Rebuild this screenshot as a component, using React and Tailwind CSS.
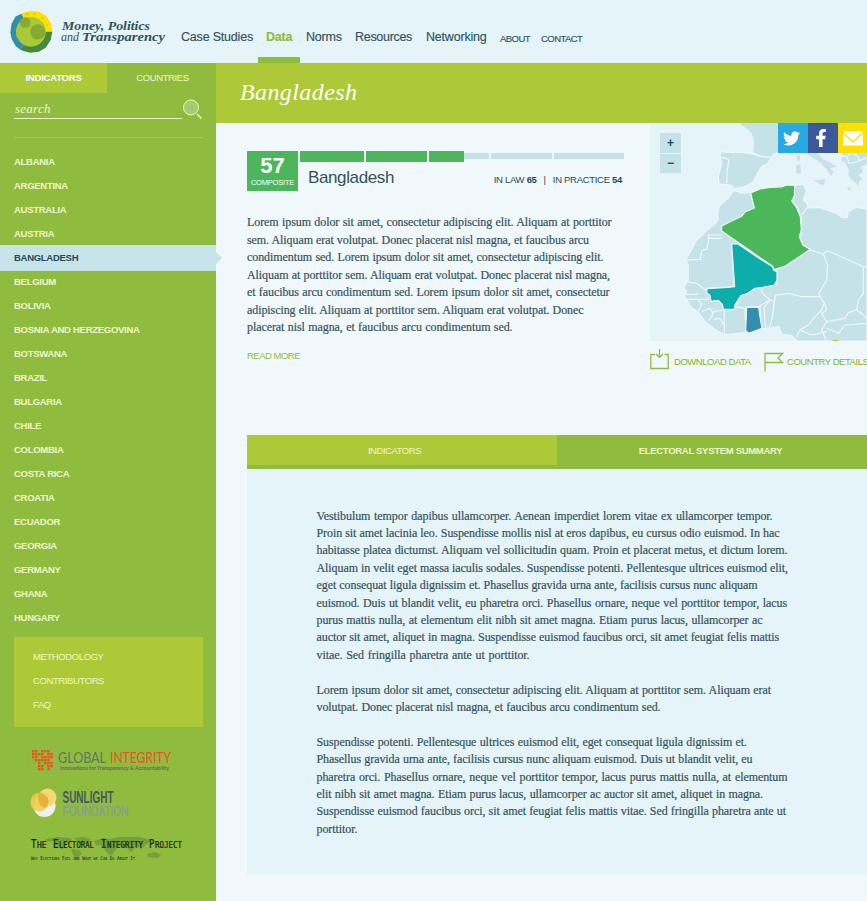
import React from "react";
import { FaFacebookF, FaTwitter } from "react-icons/fa";

const SANS = "font-['Liberation_Sans',Arial,sans-serif]";
const SERIF = "font-['Liberation_Serif',Georgia,serif]";

const countries = [
  "Albania", "Argentina", "Australia", "Austria", "Bangladesh", "Belgium", "Bolivia",
  "Bosnia and Herzegovina", "Botswana", "Brazil", "Bulgaria", "Chile", "Colombia",
  "Costa Rica", "Croatia", "Ecuador", "Georgia", "Germany", "Ghana", "Hungary",
];

const intro = [
  [364.5, "Lorem ipsum dolor sit amet, consectetur adipiscing elit. Aliquam at porttitor"],
  [342, "sem. Aliquam erat volutpat. Donec placerat nisl magna, et faucibus arcu"],
  [356.5, "condimentum sed. Lorem ipsum dolor sit amet, consectetur adipiscing elit."],
  [363, "Aliquam at porttitor sem. Aliquam erat volutpat. Donec placerat nisl magna,"],
  [362.5, "et faucibus arcu condimentum sed. Lorem ipsum dolor sit amet, consectetur"],
  [336.5, "adipiscing elit. Aliquam at porttitor sem. Aliquam erat volutpat. Donec"],
  [265.5, "placerat nisl magna, et faucibus arcu condimentum sed."],
];

const summary = [
  [
    [456, "Vestibulum tempor dapibus ullamcorper. Aenean imperdiet lorem vitae ex ullamcorper tempor."],
    [463, "Proin sit amet lacinia leo. Suspendisse mollis nisl at eros dapibus, eu cursus odio euismod. In hac"],
    [471, "habitasse platea dictumst. Aliquam vel sollicitudin quam. Proin et placerat metus, et dictum lorem."],
    [471.5, "Aliquam in velit eget massa iaculis sodales. Suspendisse potenti. Pellentesque ultrices euismod elit,"],
    [441, "eget consequat ligula dignissim et. Phasellus gravida urna ante, facilisis cursus nunc aliquam"],
    [470.5, "euismod. Duis ut blandit velit, eu pharetra orci. Phasellus ornare, neque vel porttitor tempor, lacus"],
    [446, "purus mattis nulla, at elementum elit nibh sit amet magna. Etiam purus lacus, ullamcorper ac"],
    [462.5, "auctor sit amet, aliquet in magna. Suspendisse euismod faucibus orci, sit amet feugiat felis mattis"],
    [213, "vitae. Sed fringilla pharetra ante ut porttitor."],
  ],
  [
    [454.5, "Lorem ipsum dolor sit amet, consectetur adipiscing elit. Aliquam at porttitor sem. Aliquam erat"],
    [344, "volutpat. Donec placerat nisl magna, et faucibus arcu condimentum sed."],
  ],
  [
    [430.5, "Suspendisse potenti. Pellentesque ultrices euismod elit, eget consequat ligula dignissim et."],
    [436, "Phasellus gravida urna ante, facilisis cursus nunc aliquam euismod. Duis ut blandit velit, eu"],
    [471, "pharetra orci. Phasellus ornare, neque vel porttitor tempor, lacus purus mattis nulla, at elementum"],
    [446.5, "elit nibh sit amet magna. Etiam purus lacus, ullamcorper ac auctor sit amet, aliquet in magna."],
    [469.5, "Suspendisse euismod faucibus orci, sit amet feugiat felis mattis vitae. Sed fringilla pharetra ante ut"],
    [44, "porttitor."],
  ],
];

function Lines({ lines }) {
  return (
    <p className={`${SERIF} text-[12px] tracking-[-0.08px] text-[#35535a] [-webkit-text-stroke:0.2px_#35535a]`}>
      {lines.map(([width, text]) => (
        <span key={text} className="block whitespace-nowrap [text-align-last:justify]" style={{ width }}>
          {text}
        </span>
      ))}
    </p>
  );
}

function Logo() {
  return (
    <svg className="mt-[11px] ml-[10px] h-[42px] w-[43px] shrink-0" viewBox="30 32 128 127">
      <path d="M93 95 63 40 78 34 95 32 119 35 140 49 154 72 157 95Z" fill="#fbe000" />
      <path d="M93 95H157L152 120 137 143 116 155 90 158 72 154 60 149Z" fill="#46893f" />
      <path d="M93 95 60 149 46 138 34 117 30 96 34 70 46 49 63 40Z" fill="#318fae" />
      <circle cx="92" cy="95" r="45" fill="#a9c935" />
      <circle cx="75" cy="67" r="16" fill="#87aa34" />
      <circle cx="113" cy="95" r="23" fill="#87aa34" />
      <g fill="#e0b818"><circle cx="80" cy="42" r="3" /><circle cx="104" cy="42" r="3" /><circle cx="128" cy="54" r="3" /><circle cx="142" cy="75" r="3" /></g>
    </svg>
  );
}

function Header() {
  return (
    <header className="flex h-[63px] bg-[#e5f4f9] text-[#34525a]">
      <Logo />
      <svg className="mt-[16px] ml-[8px] h-[32px] w-[106px] shrink-0" viewBox="0 0 106 32">
        <g fontFamily="Liberation Serif, serif" fontStyle="italic" fill="#34525a" fontSize="12.5">
          <text x="1" y="13.500" fontWeight="bold" textLength="88" lengthAdjust="spacingAndGlyphs">Money, Politics</text>
          <text x="0" y="24.500" textLength="18" lengthAdjust="spacingAndGlyphs">and</text>
          <text x="21" y="24.500" fontWeight="bold" textLength="83" lengthAdjust="spacingAndGlyphs">Transparency</text>
        </g>
      </svg>
      <nav className="ml-[14px] flex text-[12.5px] leading-[15px] tracking-[-0.2px] [-webkit-text-stroke:0.15px]">
        <a className="w-[77px] pt-[30px] whitespace-nowrap">Case Studies</a>
        <a className="w-[42px] border-b-[6px] border-[#8fbc3f] pt-[30px] pl-2 font-bold whitespace-nowrap text-[#8fbc3f]">Data</a>
        <a className="ml-[6px] w-[49px] pt-[30px]">Norms</a>
        <a className="w-[71px] pt-[30px] tracking-[-0.3px]">Resources</a>
        <a className="w-[74px] pt-[30px]">Networking</a>
        <a className="w-[41px] pt-[31px] text-[9.5px] tracking-[-0.55px]">ABOUT</a>
        <a className="pt-[31px] text-[9.5px] tracking-[-0.55px]">CONTACT</a>
      </nav>
    </header>
  );
}

const dots = ["1101110", "1111011", "1101111", "0111110", "0010111", "0011011", "0011010"];

const projectName = [
  ["T", 31, 5.5, "HE", 37, 9.5],
  ["E", 53, 5.5, "LECTORAL", 59, 35],
  ["I", 101, 5.5, "NTEGRITY", 107, 36],
  ["P", 149, 5.5, "ROJECT", 155, 27],
];

function Partners() {
  return (
    <svg className="mt-[15px] ml-[25px] h-[125px] w-[165px]" viewBox="25 742 165 125">
      <rect x="31.500" y="749.500" width="23" height="22" fill="none" stroke="#a3ab6e" />
      {dots.map((row, y) =>
        [...row].map((on, x) =>
          on === "1" ? <rect key={`${x}-${y}`} x={32 + x * 3.05} y={750 + y * 3} width="2.400" height="2.400" fill="#f04e23" /> : null
        )
      )}
      <g fontFamily="Lato, sans-serif">
        <text x="58" y="762.500" fontSize="15" fill="#64745a" textLength="48" lengthAdjust="spacingAndGlyphs">GLOBAL</text>
        <text x="110" y="762.500" fontSize="15" fill="#f04e23" textLength="61" lengthAdjust="spacingAndGlyphs">INTEGRITY</text>
        <text x="60" y="770" fontSize="6" fill="#64745a" stroke="#64745a" strokeWidth=".2" textLength="109" lengthAdjust="spacingAndGlyphs">Innovations for Transparency &amp; Accountability</text>
      </g>
      <circle cx="44.500" cy="806" r="11" fill="#eff0ee" />
      <circle cx="47.500" cy="797.500" r="9" fill="#f8d778" />
      <circle cx="39.500" cy="802" r="9.200" fill="#f4cb4d" opacity=".9" />
      <path d="M39 793a9 9 0 0 1 9.500 10 9 9 0 0 1-4 5 9 9 0 0 1-6-10z" fill="#e5b136" />
      <g fontFamily="Liberation Sans, sans-serif">
        <text x="62.500" y="803" fontSize="16.500" fontWeight="bold" fill="#455866" textLength="51" lengthAdjust="spacingAndGlyphs">SUNLIGHT</text>
        <text x="62.500" y="816" fontSize="15.500" fill="#87a08c" stroke="#87a08c" strokeWidth=".5" textLength="66" lengthAdjust="spacingAndGlyphs">FOUNDATION</text>
      </g>
      <path
        d="M46 839l11-2 13 1 3 3-6 3-5 6-4-4-4-5-9 1zM74 838l9-1 8 2-4 5-7-1zM71 849l8 1 3 4-6 5-3-4zM94 841l9-3 7 1 9-2 20 0 12 3-4 4-6 5-5-3-5 6-5-5-7-1-4 5-4 5-5-4-3-6-7-1zM147 854l8-2 6 3-3 3-10-1z"
        fill="#72a03a"
      />
      <g fill="#121a10" fontFamily="DejaVu Sans Mono, monospace">
        {projectName.map(([cap, x, w, rest, rx, rw]) => (
          <g key={rest} stroke="#121a10" strokeWidth=".2">
            <text x={x} y="848" fontSize="12" textLength={w} lengthAdjust="spacingAndGlyphs">{cap}</text>
            <text x={rx} y="848" fontSize="9.500" textLength={rw} lengthAdjust="spacingAndGlyphs">{rest}</text>
          </g>
        ))}
        <text x="31" y="860" fontSize="5" textLength="104" lengthAdjust="spacingAndGlyphs" style={{ fontVariant: "small-caps" }}>Why Elections Fail and What we Can Do About It</text>
      </g>
    </svg>
  );
}

function Sidebar() {
  return (
    <aside className="h-[838px] w-[216px] shrink-0 bg-[#8fbc3f] text-[#eff7c8]">
      <div className="flex h-[30px] text-center text-[9.5px] leading-[30px]">
        <div className="w-[107px] bg-[#aec937] font-bold tracking-[-0.2px] text-white">INDICATORS</div>
        <div className="flex-1 pl-[2px] tracking-[-0.4px]">COUNTRIES</div>
      </div>
      <div className="ml-[14px] flex h-[44px] w-[190px]">
        <div className={`mt-[8px] h-[18px] w-[168px] border-b border-[#eff7c8] pl-[1px] ${SERIF} text-[13px] leading-[16px] tracking-[0.25px] italic`}>search</div>
        <svg className="mt-[5px] h-[23px] w-[22px]" viewBox="0 0 22 23" fill="none" stroke="#eff7c8" strokeWidth="1">
          <circle cx="9" cy="9.500" r="7.500" fill="#a5cb70" /><path d="M15 16l4.500 4.500" strokeWidth="1.500" />
        </svg>
      </div>
      <div className="mx-[14px] h-px w-[189px] bg-[#aec937]" />
      <ul className="mt-[12px] text-[9.5px] font-bold leading-[24px] tracking-[-0.28px]">
        {countries.map((name) =>
          name === "Bangladesh" ? (
            <li key={name} className="relative -my-px h-[26px] bg-[#c6e3ea] pl-[14px] leading-[26px] text-[#234b59] uppercase">
              {name}
              <svg className="absolute top-[7px] left-[216px] h-[12px] w-[6px]" viewBox="0 0 6 12"><path d="M0 0l6 6-6 6z" fill="#c6e3ea" /></svg>
            </li>
          ) : (
            <li key={name} className="h-[24px] pl-[14px] uppercase">{name}</li>
          )
        )}
      </ul>
      <div className="mt-[7px] ml-[14px] h-[90px] w-[189px] bg-[#aec937] pt-[8px] pl-[19px] text-[9.5px] leading-[24px] tracking-[-0.4px]">
        <div>METHODOLOGY</div>
        <div>CONTRIBUTORS</div>
        <div>FAQ</div>
      </div>
      <Partners />
    </aside>
  );
}

function Map() {
  return (
    <div className="relative h-[218px] w-[217px] overflow-hidden bg-[#e5f4f9]">
      <svg className="block h-[218px] w-[217px]" viewBox="15 9 651 654">
        <g fill="#c6e2e9" stroke="#eef8fb" strokeWidth="3.500" strokeLinejoin="round">
          <path d="M283 9 300 22 320 40 327 60 325 96 350 108 378 112 386 100 410 94 470 85 482 99 500 112 525 127 545 148 558 168 566 155 555 145 575 140 560 130 535 118 515 98 580 85 596 108 588 120 602 130 612 150 610 165 620 180 633 190 640 200 643 183 655 180 640 165 655 155 646 142 666 132V9Z" stroke="none" />
          <path d="M228 95 250 97 290 97 325 102 350 110 380 112 370 128 350 140 335 165 325 185 300 200 270 206 258 196 240 193 222 192 220 170 230 130 225 108Z" />
          <path d="M228 112 252 118 247 150 245 190M588 105 605 110 612 130 640 124 666 112M612 108 615 95 640 110 644 125" fill="none" />
          <path d="M454 107 463 104 466 120 458 124ZM452 135 466 132 468 158 455 162ZM505 181 540 178 537 195 525 193ZM605 200 618 205 612 212Z" stroke="none" />
          <path d="M265 211 290 219 317 218 360 202 420 196 448 195 460 193 478 195 485 215 475 238 487 252 487 264 520 262 545 270 575 280 592 293 608 292 609 275 635 262 666 267V663H455L440 647 410 643 402 620 350 627 303 638 240 644 215 632 180 605 158 575 140 563 118 530 124 515 116 503 130 480 130 435 122 420 132 402 144 382 153 362 171 345 187 329 212 310 220 298 217 278 225 256 250 234Z" />
          <g fill="none">
            <path d="M230 345H190V361L186 386 170 393 166 418 122 420M230 355 H190M260 372 268 500 185 505" />
            <path d="M122 485 155 490 175 505 187 512M118 523H160M120 538H192M157 538 170 552 160 573M170 575 195 565 205 580 192 603M205 575 235 570M207 598 225 595 238 618 238 642M237 570 238 615" />
            <path d="M270 560 300 565 303 635M275 555 290 525 320 505 350 502 350 517 375 540 340 560 300 562M345 560 350 627M375 540 357 563 362 625M375 540 388 545 382 590 374 622" />
            <path d="M395 450 396 495 350 502M388 545 392 525 430 520 470 530 525 530 538 548 530 570 510 590 490 615 465 630 455 650M490 388 535 402 548 434 545 480 522 520 525 530M535 402 548 392 655 440 655 520 640 540 635 570 655 585M440 240 458 262 470 300 468 350M470 285 487 262M655 440H666M538 548 545 570 530 580 545 605 600 595 610 578 635 570M545 605 530 630 545 663M655 585 666 600M545 625 580 640 600 615 666 610M465 630 500 645 545 635" />
          </g>
          <path d="M317 219 345 207 375 202 410 201 425 195 449 196 448 228 440 243 455 263 466 290 469 330 463 350 474 376 496 388 445 422 418 440 386 449 383 439 341 410 230 333 230 318 260 303 290 289 300 276 328 264Z" fill="#4bb65a" />
          <path d="M260 372H279L341 414 383 440 386 451 396 455 396 480 388 495 350 503 330 505 310 519 288 527 279 540 270 555 267 569 235 567 232 553 220 541 198 544 195 526 185 519 186 506 248 502 269 500Z" fill="#0cadab" />
          <path d="M305 562H341L344 585 351 625 312 640 302 632Z" fill="#348fae" />
        </g>
        <path d="M561 663Q570 655 583 663Z" fill="#aec937" />
      </svg>
      <div className="absolute top-[10px] left-[10px] flex flex-col gap-[1px] text-center text-[12px] leading-[19px] font-bold text-[#234b59]">
        <button className="h-[20px] w-[21px] bg-[#c6e2e9]">+</button>
        <button className="h-[19px] w-[21px] bg-[#c6e2e9]">−</button>
      </div>
      <div className="absolute top-0 right-0 flex h-[30px] text-white">
        <div className="flex w-[30px] items-center bg-[#27a9e1] pl-[5px]"><FaTwitter className="size-[17px]" /></div>
        <div className="flex w-[30px] items-center bg-[#3b5998] pl-[4px]"><FaFacebookF className="size-[18px]" /></div>
        <div className="w-[29px] bg-[#fbe000]">
          <svg viewBox="0 0 29 30" className="h-[30px] w-[29px]"><path d="M5 8.500H25V22.500H5Z" fill="#fff" /><path d="M4.500 9 15 19 25.500 9" fill="none" stroke="#fbe000" strokeWidth="1.400" /></svg>
        </div>
      </div>
    </div>
  );
}

function Score() {
  return (
    <div className="flex h-[40px]">
      <div className="h-[40px] w-[51px] shrink-0 bg-[#4bb65a] text-center text-white">
        <div className="pt-[4px] text-[22px] leading-[22px] font-bold">57</div>
        <div className="text-[7.5px] leading-[11px] tracking-[-0.2px] whitespace-nowrap">COMPOSITE</div>
      </div>
      <div className="ml-[2px] w-[324px]">
        <div className="flex h-[11px] gap-[2px]">
          <div className="w-[64px] bg-[#4bb65a]" />
          <div className="w-[61px] bg-[#4bb65a]" />
          <div className="flex w-[60px]">
            <div className="h-[11px] w-[35px] bg-[#4bb65a]" /><div className="mt-[2px] h-[6px] flex-1 bg-[#c6e2e9]" />
          </div>
          <div className="mt-[2px] h-[6px] w-[61px] bg-[#c6e2e9]" />
          <div className="mt-[2px] h-[6px] w-[70px] bg-[#c6e2e9]" />
        </div>
        <div className="flex justify-between pl-[8px] text-[#34525a]">
          <h2 className="mt-[6px] text-[17px] leading-[20px] tracking-[-0.38px]">Bangladesh</h2>
          <div className="mt-[11px] mr-[2px] text-[9.5px] leading-[14px] tracking-[-0.3px] whitespace-pre text-[#234b59]">
            IN LAW <b>65</b>{"   |   "}IN PRACTICE <b>54</b>
          </div>
        </div>
      </div>
    </div>
  );
}

function Main() {
  return (
    <main className="w-[651px] shrink-0">
      <h1 className={`h-[60px] bg-[#aec937] pl-[24px] ${SERIF} text-[24px] leading-[59px] tracking-[0.4px] text-white italic`}>Bangladesh</h1>
      <div className="flex h-[312px]">
        <div className="w-[434px] shrink-0 pt-[28px] pl-[31px]">
          <Score />
          <div className="mt-[23px] leading-[17.5px]"><Lines lines={intro} /></div>
          <a className="mt-[12px] block text-[9.5px] leading-[14px] tracking-[-0.5px] text-[#8fbc3f]">READ MORE</a>
        </div>
        <div className="w-[217px] shrink-0">
          <Map />
          <div className="flex pt-[7px] text-[9.5px] leading-[27px] tracking-[-0.45px] whitespace-nowrap text-[#82b32b]">
            <svg className="h-[24px] w-[20px] shrink-0" viewBox="0 0 20 24" fill="none" stroke="#8fbc3f" strokeWidth="1.300"><path d="M5 6.500H.800V20.500H18.200V6.500H14.500M9.500 1V9M6 6l3.500 3.300L13 6" /></svg>
            <span className="ml-[4px] w-[90px] shrink-0">DOWNLOAD DATA</span>
            <svg className="h-[24px] w-[20px] shrink-0" viewBox="0 0 20 24" fill="none" stroke="#8fbc3f" strokeWidth="1.300"><path d="M1 23.500V5.500H18.500L14 10 18.500 14.500H1" /></svg>
            <span className="ml-[3px]">COUNTRY DETAILS</span>
          </div>
        </div>
      </div>
      <section className="ml-[31px] h-[440px] bg-[#e5f4f9]">
        <div className="flex h-[34px] bg-[#8fbc3f] text-center text-[9.5px] leading-[31px] text-[#eff7c8]">
          <div className="h-[30px] w-[310px] bg-[#aec937] pr-[15px] tracking-[-0.45px]">INDICATORS</div>
          <div className="flex-1 pr-[3px] font-bold tracking-[-0.3px]">ELECTORAL SYSTEM SUMMARY</div>
        </div>
        <div className="flex flex-col gap-[17.4px] pt-[38.5px] pl-[69.5px] leading-[17.4px]">
          {summary.map((lines, i) => <Lines key={i} lines={lines} />)}
        </div>
      </section>
    </main>
  );
}

export default function App() {
  return (
    <div className={`h-[901px] w-[867px] overflow-hidden bg-[#f1f8fc] ${SANS}`}>
      <Header />
      <div className="flex">
        <Sidebar />
        <Main />
      </div>
    </div>
  );
}
